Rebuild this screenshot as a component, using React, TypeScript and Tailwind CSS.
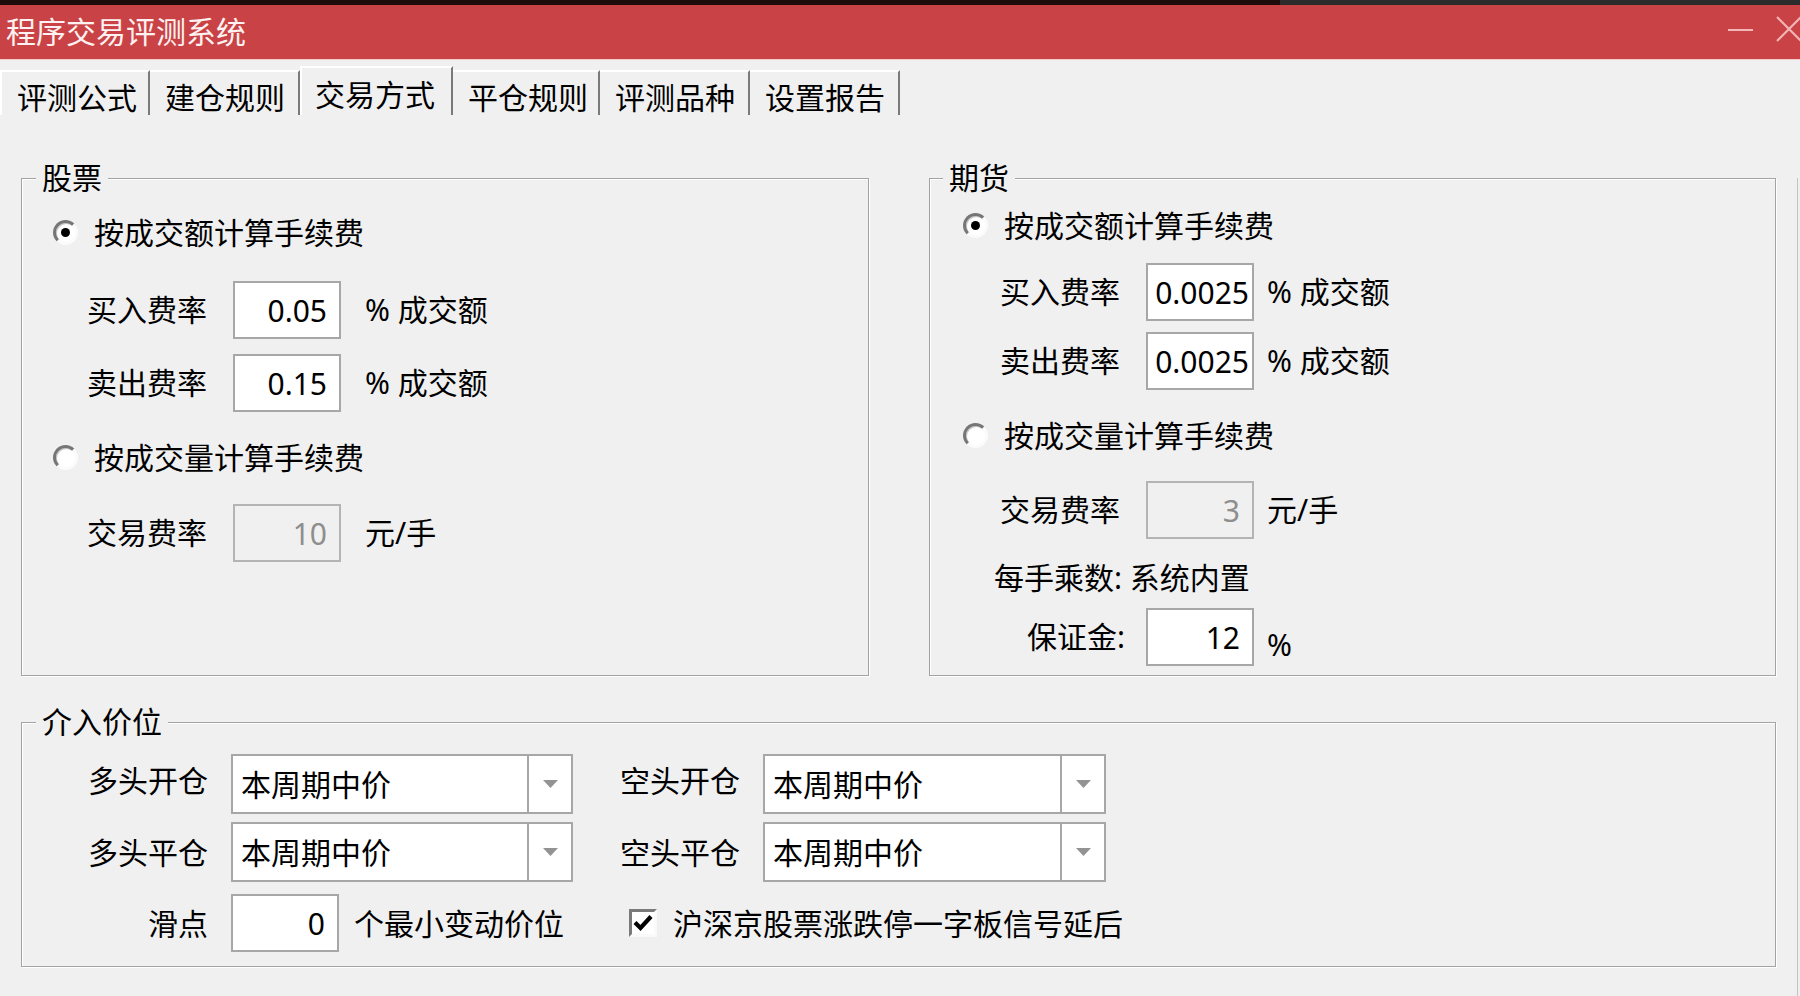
import React from 'react'

const FONT = 'font-[family-name:"Noto_Sans","Noto_Sans_CJK_SC",sans-serif]'

const tabs = ['评测公式', '建仓规则', '交易方式', '平仓规则', '评测品种', '设置报告']

function Radio({ checked }: { checked?: boolean }) {
  return (
    <span className="flex h-[25px] w-[25px] shrink-0 items-center justify-center rounded-full border-[3px] border-t-[#767676] border-l-[#767676] border-r-[#fbfbfb] border-b-[#fbfbfb] bg-white shadow-[inset_1px_1px_0_#c8c8c8]">
      {checked && <span className="h-[9px] w-[9px] rounded-full bg-black" />}
    </span>
  )
}

function Field({ value, disabled, pr = 'pr-[12px]' }: { value: string; disabled?: boolean; pr?: string }) {
  return (
    <div
      className={`flex h-[58px] w-[108px] shrink-0 items-center justify-end border-2 ${pr} ${
        disabled ? 'border-[#b4b4b4] bg-[#f0f0f0] text-[#8e8e8e]' : 'border-[#a7a7a7] bg-white text-black'
      }`}
    >
      {value}
    </div>
  )
}

function Select({ value, w }: { value: string; w: string }) {
  return (
    <div className={`flex h-[60px] ${w} shrink-0 border-2 border-[#a7a7a7] bg-white`}>
      <div className="flex flex-1 items-center pl-[8px]">{value}</div>
      <div className="flex w-[44px] items-center justify-center border-l-2 border-[#a7a7a7]">
        <svg width="15" height="8" viewBox="0 0 15 8">
          <polygon points="0,0 15,0 7.5,8" fill="#939393" />
        </svg>
      </div>
    </div>
  )
}

function Group({ title, legendLeft, className, children }: { title: string; legendLeft: string; className: string; children: React.ReactNode }) {
  return (
    <div className={`relative border border-[#a3a3a3] shadow-[1px_1px_0_#ffffff,inset_1px_1px_0_#ffffff] ${className}`}>
      <span className={`absolute top-[-21px] ${legendLeft} bg-[#f0f0f0] px-[6px] leading-[40px]`}>{title}</span>
      {children}
    </div>
  )
}

function FeeRow({ label, value, suffix, disabled, pl, gap, pr, mt }: { label: string; value: string; suffix: string; disabled?: boolean; pl: string; gap: string; pr?: string; mt: string }) {
  return (
    <div className={`flex h-[58px] items-center ${pl} ${mt}`}>
      <span className="w-[146px] shrink-0 leading-[40px]">{label}</span>
      <Field value={value} disabled={disabled} pr={pr} />
      <span className={`${gap} leading-[40px]`}>{suffix}</span>
    </div>
  )
}

export default function App() {
  return (
    <div className={`h-[996px] w-[1800px] overflow-hidden bg-[#f0f0f0] text-[30px] text-black ${FONT}`}>
      <div className="flex h-[5px]">
        <div className="w-[1280px] bg-[#1f0b0b]" />
        <div className="flex-1 bg-[#2c2c2c]" />
      </div>
      {/* title bar */}
      <div className="flex h-[55px] items-center border-b border-[#f3c9c9] bg-[#c94346] pl-[6px] text-[#fdf1f1]">
        <span className="leading-none">程序交易评测系统</span>
        <span className="mb-[4px] ml-auto h-[2px] w-[25px] bg-[#f3b6b6]" />
        <svg className="mb-[6px] ml-[23px] mr-[-2px]" width="26" height="26" viewBox="0 0 26 26">
          <path d="M1 1 L25 25 M25 1 L1 25" stroke="#f3b6b6" strokeWidth="2" />
        </svg>
      </div>
      {/* tabs */}
      <div className="flex h-[55px] items-end">
        {tabs.map((t, i) =>
          i === 2 ? (
            <div key={t} className="h-[49px] w-[153px] border-x-2 border-t-2 border-l-white border-t-white border-r-[#7a7a7a] pl-[13px] pt-[7px] leading-[40px]">
              {t}
            </div>
          ) : (
            <div
              key={t}
              className={`h-[45px] ${i === 3 ? 'w-[147px]' : 'w-[150px]'} border-t-2 border-r-2 border-t-white border-r-[#7a7a7a] pl-[15px] pt-[6px] leading-[40px] ${i === 0 ? 'w-[148px] border-l-2 border-l-white pl-[13px]' : ''}`}
            >
              {t}
            </div>
          )
        )}
      </div>
      {/* tab page */}
      <div className="h-[881px] w-[1798px] border-r border-b border-[#c4c4c4] pl-[21px]">
        <div className="mt-[63px] flex gap-[60px]">
          <Group title="股票" legendLeft="left-[14px]" className="h-[498px] w-[848px] pt-[33px]">
            <div className="flex h-[40px] items-center pl-[31px]">
              <Radio checked />
              <span className="ml-[16px]">按成交额计算手续费</span>
            </div>
            <FeeRow label="买入费率" value="0.05" suffix="% 成交额" pl="pl-[65px]" gap="ml-[24px]" mt="mt-[29px]" />
            <FeeRow label="卖出费率" value="0.15" suffix="% 成交额" pl="pl-[65px]" gap="ml-[24px]" mt="mt-[15px]" />
            <div className="mt-[25px] flex h-[40px] items-center pl-[31px]">
              <Radio />
              <span className="ml-[16px]">按成交量计算手续费</span>
            </div>
            <FeeRow label="交易费率" value="10" suffix="元/手" disabled pl="pl-[65px]" gap="ml-[24px]" mt="mt-[27px]" />
          </Group>

          <Group title="期货" legendLeft="left-[13px]" className="h-[498px] w-[847px] pt-[26px]">
            <div className="flex h-[40px] items-center pl-[33px]">
              <Radio checked />
              <span className="ml-[16px]">按成交额计算手续费</span>
            </div>
            <FeeRow label="买入费率" value="0.0025" suffix="% 成交额" pl="pl-[70px]" gap="ml-[13px]" pr="pr-[3px]" mt="mt-[18px]" />
            <FeeRow label="卖出费率" value="0.0025" suffix="% 成交额" pl="pl-[70px]" gap="ml-[13px]" pr="pr-[3px]" mt="mt-[11px]" />
            <div className="mt-[25px] flex h-[40px] items-center pl-[33px]">
              <Radio />
              <span className="ml-[16px]">按成交量计算手续费</span>
            </div>
            <FeeRow label="交易费率" value="3" suffix="元/手" disabled pl="pl-[70px]" gap="ml-[13px]" mt="mt-[26px]" />
            <div className="mt-[18px] flex h-[40px] items-center pl-[64px]">每手乘数: 系统内置</div>
            <div className="mt-[11px] flex h-[58px] items-center pl-[70px]">
              <span className="w-[146px] shrink-0 pr-[21px] text-right leading-[40px]">保证金:</span>
              <Field value="12" />
              <span className="ml-[13px] mt-[16px] leading-[40px]">%</span>
            </div>
          </Group>
        </div>

        <Group title="介入价位" legendLeft="left-[14px]" className="mt-[46px] h-[245px] w-[1755px] pt-[31px]">
          <div className="flex h-[60px] items-center">
            <span className="w-[209px] pb-[8px] pr-[23px] text-right">多头开仓</span>
            <Select value="本周期中价" w="w-[342px]" />
            <span className="w-[190px] pb-[8px] pr-[23px] text-right">空头开仓</span>
            <Select value="本周期中价" w="w-[343px]" />
          </div>
          <div className="mt-[8px] flex h-[60px] items-center">
            <span className="w-[209px] pr-[23px] text-right">多头平仓</span>
            <Select value="本周期中价" w="w-[342px]" />
            <span className="w-[190px] pr-[23px] text-right">空头平仓</span>
            <Select value="本周期中价" w="w-[343px]" />
          </div>
          <div className="mt-[12px] flex h-[58px] items-center">
            <span className="w-[209px] pr-[23px] text-right">滑点</span>
            <Field value="0" />
            <span className="ml-[15px] w-[275px]">个最小变动价位</span>
            <span className="flex h-[28px] w-[28px] items-center justify-center border-[3px] border-t-[#7a7a7a] border-l-[#7a7a7a] border-r-[#fafafa] border-b-[#fafafa] bg-white">
              <svg width="20" height="18" viewBox="0 0 20 18">
                <path d="M2 8.5 L7.5 14 L18 2.5" fill="none" stroke="#000" strokeWidth="4.2" />
              </svg>
            </span>
            <span className="ml-[16px]">沪深京股票涨跌停一字板信号延后</span>
          </div>
        </Group>
      </div>
    </div>
  )
}
